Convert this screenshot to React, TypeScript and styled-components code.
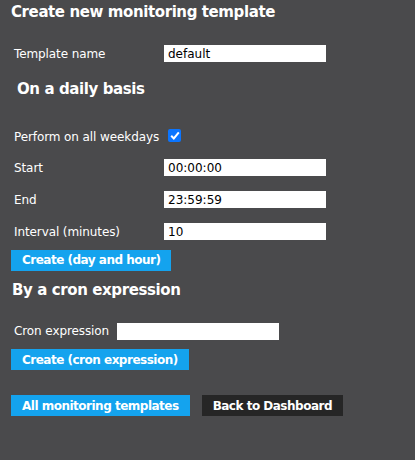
import React from 'react';
import styled, { createGlobalStyle } from 'styled-components';

const GlobalStyle = createGlobalStyle`
    html, body {
        margin: 0;
        padding: 0;
        background: #4a4a4c;
    }
    body {
        font-family: Tahoma, "DejaVu Sans", sans-serif;
        color: #ffffff;
    }
`;

const Page = styled.div`
    min-height: 460px;
    padding: 0 11px;
    box-sizing: border-box;
`;

const Title = styled.h1`
    margin: 0;
    padding-top: 2px;
    font-size: 15px;
    line-height: 20px;
    font-weight: 700;
    letter-spacing: -0.4px;
`;

const Heading = styled.h2<{ $indent?: number }>`
    margin: 0;
    padding-left: ${(p) => p.$indent ?? 1}px;
    font-size: 15px;
    line-height: 20px;
    font-weight: 700;
    letter-spacing: -0.4px;
`;

const FormRow = styled.div<{ $labelWidth?: number }>`
    display: grid;
    grid-template-columns: ${(p) => p.$labelWidth ?? 150}px 162px;
    align-items: center;
    height: 17px;
    padding-left: 3px;
`;

const Label = styled.label`
    font-size: 12px;
    letter-spacing: -0.1px;
`;

const TextInput = styled.input`
    box-sizing: border-box;
    width: 162px;
    height: 17px;
    border: none;
    margin: 0;
    padding: 0 4px;
    background: #ffffff;
    color: #000000;
    font-family: Tahoma, "DejaVu Sans", sans-serif;
    font-size: 12px;
    outline: none;
`;

const CheckBox = styled.span`
    display: inline-flex;
    align-items: center;
    justify-content: center;
    width: 13px;
    height: 13px;
    margin-left: 4px;
    margin-top: -3px;
    border-radius: 2px;
    background: #0b75ff;
`;

const Button = styled.button<{ $dark?: boolean }>`
    height: 21px;
    padding: 0 11px;
    border: none;
    margin: 0;
    background: ${(p) => (p.$dark ? '#262626' : '#14a3ee')};
    color: #ffffff;
    font-family: Tahoma, "DejaVu Sans", sans-serif;
    font-size: 12px;
    font-weight: 700;
    letter-spacing: -0.5px;
    cursor: pointer;
`;

const ButtonBar = styled.div`
    display: flex;
    gap: 12px;
`;

const Spacer = styled.div<{ $h: number }>`
    height: ${(p) => p.$h}px;
`;

function App() {
    return (
        <Page>
            <GlobalStyle />
            <Title>Create new monitoring template</Title>
            <Spacer $h={23} />
            <FormRow>
                <Label>Template name</Label>
                <TextInput defaultValue="default" />
            </FormRow>
            <Spacer $h={17} />
            <Heading $indent={6}>On a daily basis</Heading>
            <Spacer $h={29} />
            <FormRow>
                <Label>Perform on all weekdays</Label>
                <CheckBox>
                    <svg width="10" height="9" viewBox="0 0 10 9">
                        <path d="M1.2 4.8 L3.8 7.4 L8.8 1.4" fill="none" stroke="#fff" strokeWidth="2" />
                    </svg>
                </CheckBox>
            </FormRow>
            <Spacer $h={14} />
            <FormRow>
                <Label>Start</Label>
                <TextInput defaultValue="00:00:00" />
            </FormRow>
            <Spacer $h={15} />
            <FormRow>
                <Label>End</Label>
                <TextInput defaultValue="23:59:59" />
            </FormRow>
            <Spacer $h={15} />
            <FormRow>
                <Label>Interval (minutes)</Label>
                <TextInput defaultValue="10" />
            </FormRow>
            <Spacer $h={9} />
            <Button>Create (day and hour)</Button>
            <Spacer $h={9} />
            <Heading>By a cron expression</Heading>
            <Spacer $h={23} />
            <FormRow $labelWidth={103}>
                <Label>Cron expression</Label>
                <TextInput />
            </FormRow>
            <Spacer $h={9} />
            <Button>Create (cron expression)</Button>
            <Spacer $h={25} />
            <ButtonBar>
                <Button>All monitoring templates</Button>
                <Button $dark>Back to Dashboard</Button>
            </ButtonBar>
        </Page>
    );
}

export default App;
